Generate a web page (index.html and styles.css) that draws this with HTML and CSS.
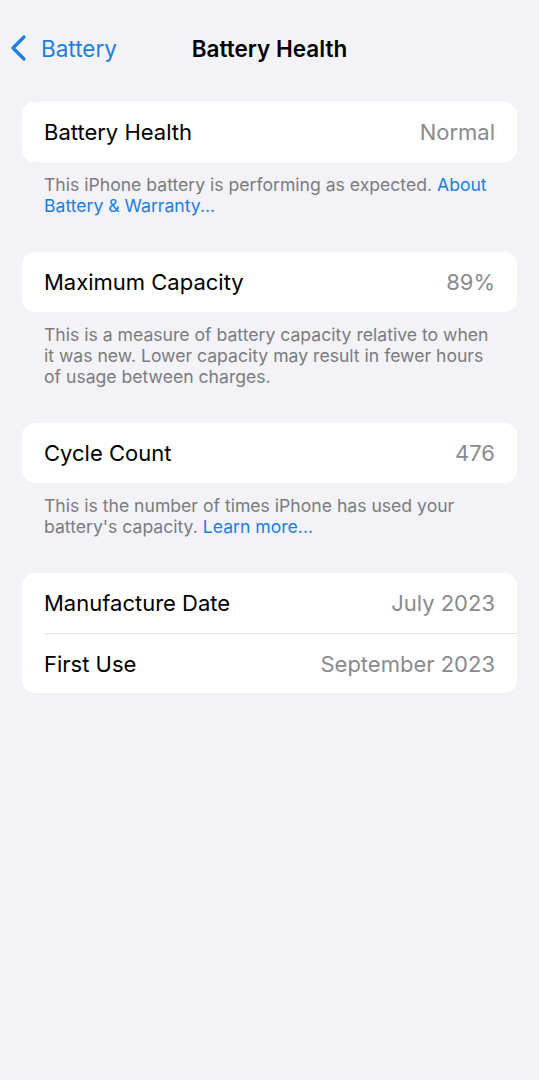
FILE: index.html
```html
<!DOCTYPE html>
<html lang="en">
  <head>
    <title>Battery Health</title>
    <link rel="stylesheet" href="styles.css">
  </head>

  <body>
    <div class="navbar">
      <a class="back" href="#">
        <svg class="chevron" width="18" height="28" viewBox="0 0 18 28">
          <polyline points="15,3 4,14 15,25" fill="none" stroke="#1a7ee4" stroke-width="3.2" stroke-linecap="round" stroke-linejoin="round"/>
        </svg>
        <span>Battery</span>
      </a>
      <div class="title">Battery Health</div>
    </div>

    <div class="group">
      <div class="card">
        <div class="row">
          <span class="label">Battery Health</span>
          <span class="value">Normal</span>
        </div>
      </div>
      <p class="note">This iPhone battery is performing as expected. <a href="#">About Battery &amp; Warranty...</a></p>
    </div>

    <div class="group">
      <div class="card">
        <div class="row">
          <span class="label">Maximum Capacity</span>
          <span class="value">89%</span>
        </div>
      </div>
      <p class="note">This is a measure of battery capacity relative to when it was new. Lower capacity may result in fewer hours of usage between charges.</p>
    </div>

    <div class="group">
      <div class="card">
        <div class="row">
          <span class="label">Cycle Count</span>
          <span class="value">476</span>
        </div>
      </div>
      <p class="note">This is the number of times iPhone has used your battery's capacity. <a href="#">Learn more...</a></p>
    </div>

    <div class="group">
      <div class="card">
        <div class="row">
          <span class="label">Manufacture Date</span>
          <span class="value">July 2023</span>
        </div>
        <div class="row">
          <span class="label">First Use</span>
          <span class="value">September 2023</span>
        </div>
      </div>
    </div>
  </body>
</html>
```

FILE: styles.css
```css
/* iOS settings look */
body {
  margin: 0;
  background-color: #f2f2f7;
  font-family: Inter, "Noto Sans", sans-serif;
  color: #000;
}

.navbar {
  position: relative;
  height: 96px;
  display: flex;
  align-items: center;
  justify-content: center;
}

.back {
  position: absolute;
  left: 9px;
  top: 34px;
  display: flex;
  align-items: center;
  gap: 14px;
  color: #1a7ee4;
  text-decoration: none;
  font-size: 22.5px;
}

.title {
  font-size: 22.5px;
  font-weight: 600;
}

.group {
  margin: 6px 22px 36px;
}

.card {
  background-color: #fff;
  border-radius: 13px;
  overflow: hidden;
}

.row {
  height: 60px;
  padding: 0 22px;
  display: flex;
  align-items: center;
  justify-content: space-between;
  font-size: 22px;
}

.row + .row {
  border-top: 1px solid #e3e3e8;
  margin-left: 22px;
  padding-left: 0;
  height: 59px;
}

.value {
  color: #8a8a8e;
}

.note {
  margin: 12px 0 0;
  padding: 0 22px;
  font-size: 17.6px;
  line-height: 21px;
  color: #7b7b80;
}

.note a {
  color: #1a7ee4;
  text-decoration: none;
}
```
